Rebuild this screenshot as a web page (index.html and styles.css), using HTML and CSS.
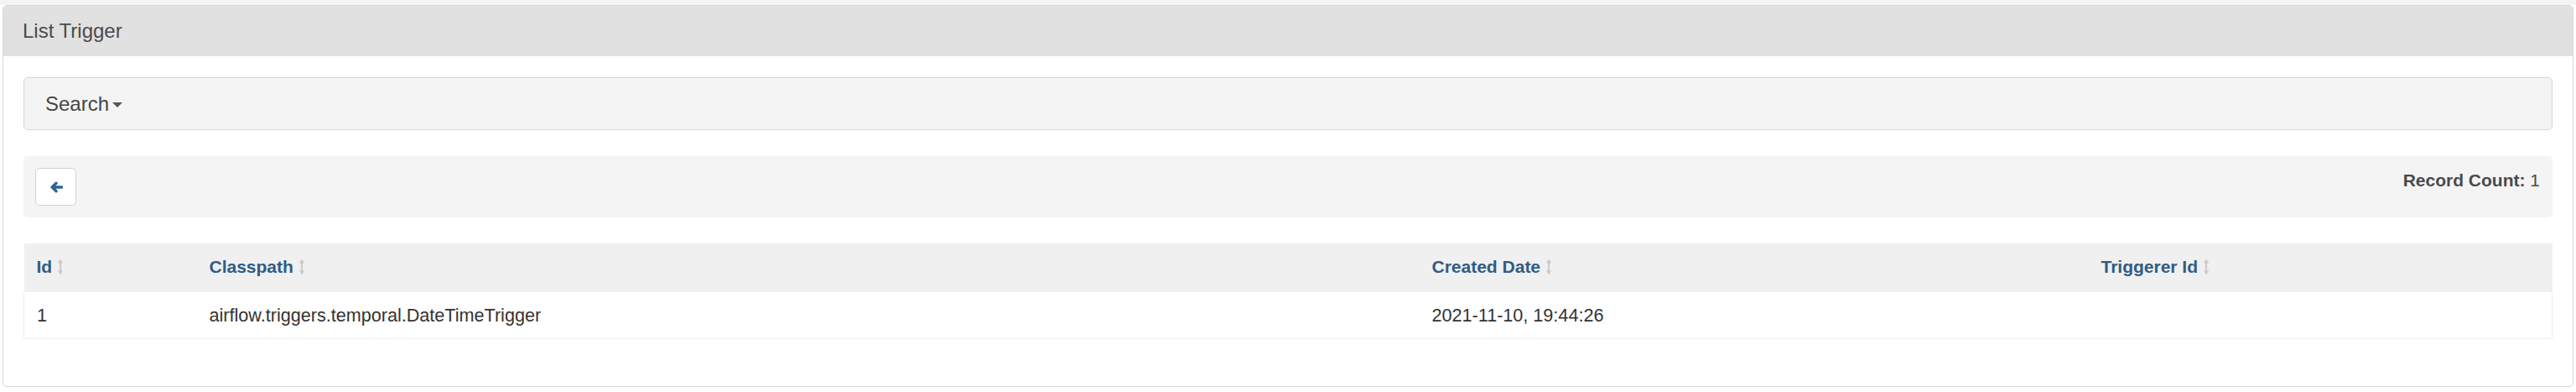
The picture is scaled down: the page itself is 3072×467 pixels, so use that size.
FILE: index.html
```html
<!DOCTYPE html>
<html>
<head>
<meta charset="utf-8">
<link rel="stylesheet" href="styles.css">
</head>
<body>
<div class="topstrip"></div>
<div class="panel">
  <div class="panel-heading">List Trigger</div>
  <div class="panel-body">
    <div class="search-well">
      <span class="search-btn">Search<span class="caret"></span></span>
    </div>
    <div class="toolbar">
      <button class="back-btn" type="button">
        <svg width="16" height="14" viewBox="0 0 16 14"><path d="M14.5 7H3.5M8 2.3L3.2 7L8 11.7" fill="none" stroke="#2f6392" stroke-width="3.4" stroke-linecap="round" stroke-linejoin="round"/></svg>
      </button>
      <div class="record-count"><b>Record Count:</b> 1</div>
    </div>
    <table class="list-table">
      <colgroup>
        <col class="c1"><col class="c2"><col class="c3"><col class="c4">
      </colgroup>
      <thead>
        <tr>
          <th>Id<svg class="sort" width="8" height="22" viewBox="0 0 8 22"><path d="M4 4V18" stroke="#cbcbcb" stroke-width="2.2"/><path d="M0.8 6.5L4 1.5L7.2 6.5Z M0.8 15.5L4 20.5L7.2 15.5Z" fill="#cbcbcb"/></svg></th>
          <th>Classpath<svg class="sort" width="8" height="22" viewBox="0 0 8 22"><path d="M4 4V18" stroke="#cbcbcb" stroke-width="2.2"/><path d="M0.8 6.5L4 1.5L7.2 6.5Z M0.8 15.5L4 20.5L7.2 15.5Z" fill="#cbcbcb"/></svg></th>
          <th>Created Date<svg class="sort" width="8" height="22" viewBox="0 0 8 22"><path d="M4 4V18" stroke="#cbcbcb" stroke-width="2.2"/><path d="M0.8 6.5L4 1.5L7.2 6.5Z M0.8 15.5L4 20.5L7.2 15.5Z" fill="#cbcbcb"/></svg></th>
          <th>Triggerer Id<svg class="sort" width="8" height="22" viewBox="0 0 8 22"><path d="M4 4V18" stroke="#cbcbcb" stroke-width="2.2"/><path d="M0.8 6.5L4 1.5L7.2 6.5Z M0.8 15.5L4 20.5L7.2 15.5Z" fill="#cbcbcb"/></svg></th>
        </tr>
      </thead>
      <tbody>
        <tr>
          <td>1</td>
          <td>airflow.triggers.temporal.DateTimeTrigger</td>
          <td>2021-11-10, 19:44:26</td>
          <td></td>
        </tr>
      </tbody>
    </table>
  </div>
</div>
</body>
</html>
```

FILE: styles.css
```css
html, body {
  margin: 0;
  padding: 0;
  background: #ffffff;
  font-family: "Liberation Sans", Arial, Helvetica, sans-serif;
  color: #333333;
}

.topstrip {
  height: 6px;
  background: #f4f4f4;
}

.panel {
  margin: 0 3px 0 3px;
  border: 1px solid #d9d9d9;
  border-radius: 5px;
  background: #ffffff;
  overflow: hidden;
}

.panel-heading {
  background: #e1e1e1;
  font-size: 24px;
  line-height: 26px;
  color: #4a4a4a;
  padding: 17px 23px 17px 23px;
}

.panel-body {
  padding: 25px 24px 56px 24px;
}

.search-well {
  height: 61px;
  border: 1px solid #d6d6d6;
  border-radius: 5px;
  background: #f4f4f4;
  display: flex;
  align-items: center;
  padding-left: 25px;
}

.search-btn {
  font-size: 24px;
  color: #454545;
  display: inline-flex;
  align-items: center;
}

.caret {
  display: inline-block;
  width: 0;
  height: 0;
  margin-left: 4px;
  margin-top: 2px;
  border-top: 6px solid #555555;
  border-left: 6px solid transparent;
  border-right: 6px solid transparent;
}

.toolbar {
  margin-top: 31px;
  height: 73px;
  box-sizing: border-box;
  padding: 14px 15px 14px 14px;
  background: #f4f4f4;
  border-radius: 5px;
  display: flex;
  justify-content: space-between;
  align-items: flex-start;
}

.back-btn {
  width: 49px;
  height: 45px;
  border: 1px solid #d2d2d2;
  border-radius: 5px;
  background: #ffffff;
  padding: 0;
  display: flex;
  align-items: center;
  justify-content: center;
}

.record-count {
  font-size: 21px;
  line-height: 30px;
  color: #4a4a4a;
}

.record-count b {
  font-weight: bold;
}

.list-table {
  margin-top: 31px;
  width: 100%;
  border-collapse: collapse;
  table-layout: fixed;
  font-size: 21px;
}

.c1 { width: 206px; }
.c2 { width: 1458px; }
.c3 { width: 798px; }
.c4 { width: auto; }

.list-table th {
  background: #f0f0f0;
  text-align: left;
  font-weight: bold;
  color: #2f5c86;
  line-height: 30px;
  padding: 13px 15px 15px 15px;
  white-space: nowrap;
}

.list-table td {
  font-size: 21.6px;
  line-height: 30px;
  padding: 13px 15px 12px 15px;
  border-bottom: 1px solid #eeeeee;
  color: #333333;
}

.list-table td:first-child {
  border-left: 1px solid #f0f0f0;
}

.list-table td:last-child {
  border-right: 1px solid #f0f0f0;
}

.sort {
  vertical-align: -4px;
  margin-left: 6px;
}
```
